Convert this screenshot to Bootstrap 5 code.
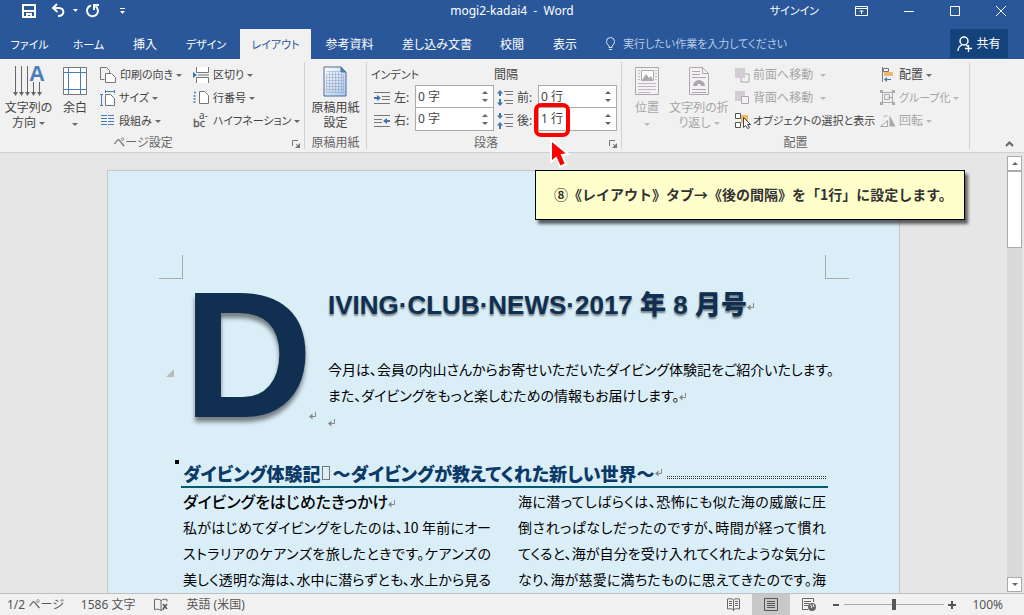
<!DOCTYPE html>
<html lang="ja">
<head>
<meta charset="utf-8">
<meta name="viewport" content="width=device-width, initial-scale=1">
<title>mogi2-kadai4 - Word</title>
<link href="https://cdn.jsdelivr.net/npm/bootstrap@5.3.0/dist/css/bootstrap.min.css" rel="stylesheet">
<style>
:root{--blue:#2a579a;--ink:#444;--dim:#a6a6a6;--line:#d2d2d2;--accent:#3f76b0}
body{font-family:"Noto Sans","Noto Sans CJK JP",sans-serif;font-size:12px;line-height:16px;color:var(--ink);font-feature-settings:"palt";background:#e6e6e6}
button,input{font:inherit;font-feature-settings:inherit;color:inherit;background:none;border:0;padding:0}
button{white-space:nowrap}
svg{display:block;flex:none;overflow:visible}
.kana{font-size:11px}
.app-head{background:var(--blue);color:#fff}
.title-row{display:grid;grid-template-columns:1fr auto 1fr;height:21px}
.win-tools{gap:36px;padding-right:18px}
.tab-row{padding-top:8px;height:38px}
.ribbon-tabs{display:grid;grid-template-columns:59px 59px 54px 68px 71px 77px 98px 52px 54px}
.ribbon-tabs a{color:#fff;text-decoration:none;display:flex;align-items:center;justify-content:center;height:30px;padding-top:2px;white-space:nowrap}
.ribbon-tabs a.current{background:#f1f1f1;color:var(--blue)}
.tell-me{width:190px;outline:0}
.tell-me::placeholder{color:#b8cbe6;opacity:1}
.share-btn{background:#14427b;width:58px;height:29px;margin-right:16px}
.ribbon{background:#f1f1f1;border-bottom:1px solid #d0d0d0;height:94px;padding-top:3px}
.r-group{border-right:1px solid var(--line);height:87px;display:flex;flex-direction:column;flex:none}
.r-body{display:flex;height:70px}
.r-caption{height:17px;color:#666;position:relative;text-align:center;line-height:22px}
.launcher{position:absolute;right:4px;top:8px}
.r-stack{display:flex;flex-direction:column;flex:none}
.r-stack>button,.r-line{height:23px;display:flex;align-items:center;gap:4px;padding-top:2px}
.big-btn{display:flex;flex-direction:column;align-items:center;padding-top:3px;line-height:15px;flex:none}
.big-btn svg.pic{height:32px;margin-bottom:3px}
.dim{color:var(--dim)}
.caret{display:inline-block;border:3px solid transparent;border-top-color:#6a6a6a;border-bottom:0;vertical-align:middle}
.dim .caret{border-top-color:#b8b8b8}
.spin{position:relative;display:flex;width:79px;height:23px;border:1px solid #ababab;background:#fff}
.spin+.spin{border-top:0}
.spin input{flex:1;min-width:0;padding-left:2px;outline:0}
.spin-arrows{display:flex;flex-direction:column;justify-content:space-around;width:14px;padding:3px}
.spin-arrows button{line-height:0}
.up,.down{display:block;width:0;border:3px solid transparent}
.up{border-bottom-color:#666;border-top:0}
.down{border-top-color:#666;border-bottom:0}
.ring{position:absolute;left:-5px;top:-5px;width:36px;height:34px;border:4px solid #f00;border-radius:7px;z-index:3}
.pointer{position:absolute;left:11px;top:30px;z-index:4}
.workspace{position:relative;flex:1;min-height:0;overflow:hidden}
.canvas{flex:1;min-width:0;overflow:hidden;padding-top:17px}
.paper{max-width:793px;min-height:1123px;margin:0 auto;background:#daeef8;border:1px solid #c6c6c6;padding-top:84px;color:#000;font-family:"Noto Sans CJK JP",sans-serif;font-size:14px;line-height:26px}
.crops{display:flex;justify-content:space-between;padding:0 50px 0 51px}
.crops i{width:24px;height:24px;border-bottom:1px solid #ababab}
.crops i:first-child{border-right:1px solid #ababab}
.crops i:last-child{border-left:1px solid #ababab}
.paper-text{position:relative;padding:0 71px 0 73px}
.hero{display:flex;padding-left:2px}
.drop-cap{position:relative;flex:none;width:145px;font:bold 180px/152px "Liberation Sans",sans-serif;color:#112f50;text-shadow:0 5px 4px #0007}
.news-title{font:bold 26px/52px "Liberation Sans","Noto Sans CJK JP",sans-serif;color:#112f50;text-shadow:0 2px 2px #0007;margin:0 0 25px;white-space:nowrap}
.news-title span{font-weight:900}
.ret{display:inline-block;flex:none}
.story-head{display:flex;align-items:center;height:29px;margin:25px 0 0;border-bottom:2px solid #005a70;font-size:18px;font-weight:900;line-height:26px;color:#0b3a66;padding-left:2px;white-space:nowrap}
.tab-box{width:8px;height:14px;border:1px solid #777;margin:0 3px 0 1px}
.leader{flex:1;height:3px;margin:10px 2px 0 4px;background:repeating-linear-gradient(transparent 0 1px,#daeef8 1px 2px),repeating-linear-gradient(90deg,#333 0 1px,#daeef8 1px 2px)}
.story{display:grid;grid-template-columns:1fr 1fr;gap:27px;padding:0 2px;white-space:nowrap}
.story p{margin:0;text-align:justify;text-align-last:justify}
.story h3{font-size:16px;line-height:26px;font-weight:500;margin:0}
.anchor-dot{position:absolute;left:67px;top:181px;width:4px;height:4px;background:#000}
.fold{position:absolute;left:58px;top:90px;border-left:8px solid transparent;border-bottom:8px solid #b9b9b9}
.callout{position:absolute;right:59px;top:17px;padding:11px 18px 12px;border:1px solid #000;background:#ffc;box-shadow:3px 4px 3px #0009;font:bold 14px/25px "Noto Sans CJK JP",sans-serif;font-feature-settings:normal;color:#333;width:430px;height:50px;white-space:nowrap;z-index:2}
.v-scroll{width:15px;margin:3px 2px 1px 0;background:#dadada}
.v-scroll button{height:15px;border:1px solid #ababab;background:#fff;display:grid;place-items:center}
.v-thumb{height:77px;border:1px solid #ababab;background:#fff}
.status{height:22px;background:#f1f1f1;border-top:1px solid #c0c0c0;color:#555;padding-left:7px}
.status .view-btn{width:38px;height:21px;display:grid;place-items:center}
.status .view-btn.on{background:#c8c8c8}
.zoom-range{appearance:none;width:100px;height:13px;margin:0 4px 0 5px;background:linear-gradient(#aaa,#aaa) 0 6px/100% 1px no-repeat}
.zoom-range::-webkit-slider-thumb{appearance:none;width:4px;height:11px;background:#555}
</style>
<script src="https://cdn.jsdelivr.net/npm/bootstrap@5.3.0/dist/js/bootstrap.bundle.min.js"></script>
</head>
<body class="d-flex flex-column vh-100 overflow-hidden">
<svg width="0" height="0" class="position-absolute" aria-hidden="true">
  <symbol id="ret" viewBox="0 0 8 8"><path d="M6.500 0v4.500H2" fill="none" stroke="#888"/><path d="M0 4.500L3.500 1.500v6z" fill="#888"/></symbol>
  <symbol id="launch" viewBox="0 0 8 8"><path d="M.5 6V.5H6M4 4l3 3" fill="none" stroke="#777"/><path d="M8 3v5H3z" fill="#777"/></symbol>
</svg>

<header class="app-head">
  <div class="title-row align-items-center">
    <div class="d-flex align-items-center" style="padding-left:22px">
      <button aria-label="上書き保存"><svg width="14" height="14"><path d="M1 1h12v12H1z" fill="none" stroke="#fff" stroke-width="2"/><path d="M2 6h10v2H2zM4 9h6v4H8v-2H6v2H4z" fill="#fff"/></svg></button>
      <button class="ms-3 d-flex align-items-center gap-2" aria-label="元に戻す"><svg width="13" height="14"><path d="M5 0L1 4l4.500 4M1 4h6c6 0 6 8-1 8" fill="none" stroke="#fff" stroke-width="2"/></svg><svg width="5" height="3"><path d="M0 0h5L2.500 3z" fill="#fff"/></svg></button>
      <button class="ms-2" aria-label="やり直し"><svg width="14" height="14"><path d="M5 1.500A5.500 5.500 0 1 0 9.500 2.200" fill="none" stroke="#fff" stroke-width="2"/><path d="M8 6V1h5" fill="none" stroke="#fff" stroke-width="2"/></svg></button>
      <button class="ms-3 ps-1" aria-label="クイックアクセスのカスタマイズ"><svg width="5" height="6"><path d="M0 .5h5" stroke="#fff"/><path d="M0 3h5L2.500 6z" fill="#fff"/></svg></button>
    </div>
    <div>mogi2-kadai4 &nbsp;-&nbsp; Word</div>
    <div class="win-tools d-flex align-items-center justify-content-end">
      <button class="kana">サインイン</button>
      <button aria-label="リボンの表示オプション"><svg width="13" height="10"><path d="M.5.500h12v9H.5zM0 2.500h13M6.500 8V4.500M4.500 6l2-2 2 2" fill="none" stroke="#fff"/></svg></button>
      <button aria-label="最小化"><svg width="10" height="10"><path d="M0 5.500h10" stroke="#fff"/></svg></button>
      <button aria-label="最大化"><svg width="10" height="10"><path d="M.5.500h9v9h-9z" fill="none" stroke="#fff"/></svg></button>
      <button aria-label="閉じる"><svg width="10" height="10"><path d="M0 0l10 10M10 0L0 10" stroke="#fff"/></svg></button>
    </div>
  </div>
  <div class="tab-row d-flex align-items-start">
    <nav class="ribbon-tabs">
      <a href="#" class="kana">ファイル</a><a href="#" class="kana">ホーム</a><a href="#">挿入</a><a href="#" class="kana">デザイン</a><a href="#" class="current kana" aria-current="page">レイアウト</a><a href="#">参考資料</a><a href="#">差し込み文書</a><a href="#">校閲</a><a href="#">表示</a>
    </nav>
    <label class="d-flex align-items-center gap-2 flex-fill" style="height:29px;padding-left:14px">
      <svg width="9" height="14"><path d="M3 10.500V9C1.500 7.500.500 6.500.500 4.500a4 4 0 0 1 8 0C8.500 6.500 7.500 7.500 6 9v1.500zM3 12.500h3" fill="none" stroke="#dce6f4"/></svg>
      <input class="tell-me kana" type="text" placeholder="実行したい作業を入力してください" aria-label="実行したい作業">
    </label>
    <button class="share-btn d-flex align-items-center justify-content-center gap-1"><svg width="15" height="16"><circle cx="7" cy="5" r="4" fill="none" stroke="#fff" stroke-width="1.500"/><path d="M1 15c0-3 1.500-5 4-6M9 9l2 1.500M8 12.500h7M11.500 9v7" fill="none" stroke="#fff" stroke-width="1.300"/></svg>共有</button>
  </div>
</header>

<section class="ribbon d-flex">
  <div class="r-group" style="width:305px">
    <div class="r-body">
      <button class="big-btn" style="width:57px">
        <svg class="pic" width="34" height="32"><path d="M3.500 1v28M9.500 1v28M15.500 1v28M21.500 17v12M27.500 17v12" stroke="#666"/><path d="M1 27l2.500 4 2.500-4zM7 27l2.500 4 2.500-4zM13 27l2.500 4 2.500-4zM19 27l2.500 4 2.500-4zM25 27l2.500 4 2.500-4z" fill="#666"/><text x="17" y="16" font-family="Liberation Sans" font-size="22" font-weight="bold" fill="#4a7ebb">A</text></svg>
        <span>文字列の</span><span>方向 <i class="caret"></i></span>
      </button>
      <button class="big-btn" style="width:36px">
        <svg class="pic" width="24" height="32"><path d="M.5 2.500h23v27H.5z" fill="#fff" stroke="#777"/><path d="M5.500 3v26M17.500 3v26M1 7.500h22M1 24.500h22" stroke="#4a7ebb"/></svg>
        <span>余白</span><i class="caret mt-2"></i>
      </button>
      <div class="r-stack kana" style="width:100px;padding-left:7px">
        <button><svg width="16" height="16"><path d="M.5 12.500V.5h6l3 3v3M.5 12.500h4" fill="none" stroke="#777"/><path d="M5.500 6.500h6l4 4v5h-10z" fill="#fff" stroke="#777"/></svg><span>印刷の向き <i class="caret"></i></span></button>
        <button><svg width="15" height="16"><path d="M5.500 4.500h5l4 4v7h-9z" fill="#fff" stroke="#777"/><path d="M1.500 4v12M0 4.500h3M0 15.500h3M5 1.500h10M5.500 0v3M14.500 0v3" stroke="#4a7ebb"/></svg><span>サイズ <i class="caret"></i></span></button>
        <button><svg width="15" height="13"><path d="M1 1.500h6M1 4.500h6M1 7.500h6M1 10.500h6M8 1.500h6M8 4.500h6M8 7.500h6M8 10.500h6" stroke="#4a7ebb"/></svg><span>段組み <i class="caret"></i></span></button>
      </div>
      <div class="r-stack kana">
        <button><svg width="16" height="16"><path d="M3.500 0v5.500h12V0M3.500 16v-5.500h12V16M5 8h11" fill="#fff" stroke="#777"/><path d="M0 5l4 3-4 3z" fill="#3f76b0"/></svg><span>区切り <i class="caret"></i></span></button>
        <button><svg width="16" height="16"><path d="M6.500 1.500h5l4 4v8h-9z" fill="#fff" stroke="#777"/><path d="M2 1.500v3M.5 6h2.500M.5 9h2.500M.5 12h2.500" stroke="#3f76b0" stroke-width="1.500" stroke-dasharray="2 1"/></svg><span>行番号 <i class="caret"></i></span></button>
        <button><svg width="16" height="16"><text x="0" y="14" font-size="11" fill="#555" stroke="#555" stroke-width=".3">bc</text><text x="6" y="6" font-size="10" fill="#555">a-</text></svg><span>ハイフネーション <i class="caret"></i></span></button>
      </div>
    </div>
    <div class="r-caption" style="padding-right:18px">ページ設定<button class="launcher" aria-label="ページ設定の詳細"><svg width="8" height="8"><use href="#launch"/></svg></button></div>
  </div>

  <div class="r-group" style="width:62px">
    <div class="r-body justify-content-center">
      <button class="big-btn">
        <svg class="pic" width="24" height="32"><defs><linearGradient id="pg" x2="1" y2="1"><stop stop-color="#fff"/><stop offset="1" stop-color="#a9c8ef"/></linearGradient></defs><path d="M1 2h17l5 5v24H1z" fill="url(#pg)" stroke="#4a6b94"/><path d="M18 2v5h5" fill="#5d86b8" stroke="#4a6b94"/><path d="M3.500 6.500h14M3.500 9.500h17v18h-17zM3.500 12.500h17M3.500 15.500h17M3.500 18.500h17M3.500 21.500h17M3.500 24.500h17M6.500 7v20M9.500 7v20M12.500 7v20M15.500 7v20M18.500 9v18" fill="none" stroke="#8d9fb9" stroke-width=".5"/></svg>
        <span>原稿用紙</span><span>設定</span>
      </button>
    </div>
    <div class="r-caption">原稿用紙</div>
  </div>

  <div class="r-group" style="width:255px">
    <div class="r-body" style="padding-left:4px">
      <div style="width:123px">
        <div class="r-line kana">インデント</div>
        <div class="d-flex">
          <div class="r-stack" style="width:44px;padding-left:3px">
            <label class="r-line" for="indL"><svg width="16" height="12"><path d="M0 .5h16M8 4.500h8M8 7.500h8M0 11.500h16" stroke="#777"/><path d="M0 5h3V3l4 3-4 3V7H0z" fill="#3f76b0"/></svg>左:</label>
            <label class="r-line" for="indR"><svg width="16" height="12"><path d="M0 .5h16M0 4.500h8M0 7.500h8M0 11.500h16" stroke="#777"/><path d="M16 5h-3V3L9 6l4 3V7h3z" fill="#3f76b0"/></svg>右:</label>
          </div>
          <div>
            <div class="spin"><input id="indL" type="text" value="0 字"><span class="spin-arrows"><button aria-label="増やす"><i class="up"></i></button><button aria-label="減らす"><i class="down"></i></button></span></div>
            <div class="spin"><input id="indR" type="text" value="0 字"><span class="spin-arrows"><button aria-label="増やす"><i class="up"></i></button><button aria-label="減らす"><i class="down"></i></button></span></div>
          </div>
        </div>
      </div>
      <div>
        <div class="r-line">間隔</div>
        <div class="d-flex">
          <div class="r-stack" style="width:44px;padding-left:3px">
            <label class="r-line" for="spB"><svg width="16" height="16"><path d="M7 1.500h9M9 4.500h7M7 10.500h9M9 13.500h7" stroke="#777"/><path d="M3 0l3 3.500H4V6H2V3.500H0zM3 16l3-3.500H4V9H2v3.500H0z" fill="#3f76b0"/></svg>前:</label>
            <label class="r-line" for="spA"><svg width="16" height="16"><path d="M7 1.500h9M9 4.500h7M7 10.500h9M9 13.500h7" stroke="#777"/><path d="M3 6l3-3.500H4V0H2v2.500H0zM3 9l3 3.500H4V16H2v-3.500H0z" fill="#3f76b0"/></svg>後:</label>
          </div>
          <div>
            <div class="spin"><input id="spB" type="text" value="0 行"><span class="spin-arrows"><button aria-label="増やす"><i class="up"></i></button><button aria-label="減らす"><i class="down"></i></button></span></div>
            <div class="spin"><input id="spA" type="text" value="1 行"><span class="spin-arrows"><button aria-label="増やす"><i class="up"></i></button><button aria-label="減らす"><i class="down"></i></button></span>
              <span class="ring"></span>
              <svg class="pointer" width="20" height="32"><path d="M1 2v22l5-4 4 9 6-3-4-9 6-1z" fill="#f00" stroke="#fff" stroke-width="2"/></svg>
            </div>
          </div>
        </div>
      </div>
    </div>
    <div class="r-caption" style="padding-right:16px">段落<button class="launcher" aria-label="段落の詳細"><svg width="8" height="8"><use href="#launch"/></svg></button></div>
  </div>

  <div class="r-group" style="width:348px">
    <div class="r-body">
      <button class="big-btn dim" style="width:50px" disabled>
        <svg class="pic" width="24" height="32"><path d="M.5 2.500h23v27H.5z" fill="#f6eff6" stroke="#aaa"/><path d="M6.500 5.500h12v10h-12z" fill="#fff" stroke="#aaa"/><path d="M7 15l4-6 3 4 2-2 2 4z" fill="#aaa"/><path d="M3 5.500h2M3 8.500h2M3 11.500h2M3 14.500h2M20 5.500h2M20 8.500h2M20 11.500h2M20 14.500h2M3 18.500h18M3 21.500h18M3 24.500h18M3 27.500h12" stroke="#bbb"/></svg>
        <span>位置</span><i class="caret mt-2"></i>
      </button>
      <button class="big-btn dim" style="width:54px" disabled>
        <svg class="pic" width="22" height="32"><path d="M1.500 2.500h13l6 6v21h-19z" fill="#f6eff6" stroke="#aaa"/><path d="M14.500 2.500v6h6M4 6.500h8M4 9.500h8M4 12.500h14M4 24.500h14M4 27.500h14" fill="none" stroke="#aaa"/><path d="M5 21a6 6 0 0 1 12 0h-4a2 2 0 0 0-4 0z" fill="#aaa"/></svg>
        <span>文字列の折</span><span>り返し <i class="caret"></i></span>
      </button>
      <div class="r-stack" style="width:145px;padding-left:9px">
        <button class="dim" disabled><svg width="14" height="14"><path d="M6 6h8v8H6z" fill="none" stroke="#aaa"/><path d="M0 0h10v10H0z" fill="#d4ccd4"/></svg><span>前面へ移動 <i class="caret ms-1"></i></span></button>
        <button class="dim" disabled><svg width="14" height="14"><path d="M0 0h10v10H0z" fill="#d4ccd4"/><path d="M6.500 5.500h7v7h-7z" fill="#f6eff6" stroke="#aaa"/></svg><span>背面へ移動 <i class="caret ms-1"></i></span></button>
        <button class="kana"><svg width="14" height="16"><path d="M6 2h7v8H6z" fill="#eeb867"/><path d="M.5.500h5v5h-5zM.5 9.500h5v5h-5z" fill="#fff" stroke="#555"/><path d="M8.500 4.500v10l2-2 2 3 2-1-2-3h3z" fill="#fff" stroke="#444"/></svg><span>オブジェクトの選択と表示</span></button>
      </div>
      <div class="r-stack" style="padding-left:9px">
        <button><svg width="15" height="15"><path d="M2.500 0v15" stroke="#777"/><path d="M3.500 1.500h5v3h-5z" fill="#fff" stroke="#777"/><path d="M4 5h9v4H4z" fill="#eeb867"/><path d="M4 12.500l3-2.500v2h4v1H7v2z" fill="#3f76b0"/></svg><span>配置 <i class="caret"></i></span></button>
        <button class="dim kana" disabled><svg width="15" height="15"><path d="M2.500 2.500h10v10h-10zM4.500 4.500h5v5h-5zM7.500 7.500h5" fill="none" stroke="#aaa"/><path d="M0 0h3v3H0zM12 0h3v3h-3zM0 12h3v3H0zM12 12h3v3h-3z" fill="#aaa"/></svg><span>グループ化 <i class="caret"></i></span></button>
        <button class="dim" disabled><svg width="15" height="13"><path d="M.5 12.500h7v-6zM4 3.500C4 1 6 1.500 7.500 2" fill="none" stroke="#aaa"/><path d="M9.500 1v11.500h6z" fill="#aaa"/></svg><span>回転 <i class="caret"></i></span></button>
      </div>
    </div>
    <div class="r-caption">配置</div>
  </div>
  <div class="flex-fill d-flex align-items-end justify-content-end" style="padding:0 10px 5px"><button aria-label="リボンを折りたたむ"><svg width="9" height="6"><path d="M1 5l3.500-3.500L8 5" fill="none" stroke="#666" stroke-width="2"/></svg></button></div>
</section>

<main class="workspace d-flex">
  <div class="canvas">
    <article class="paper">
      <div class="crops"><i></i><i></i></div>
      <div class="paper-text">
        <i class="fold"></i><i class="anchor-dot"></i>
        <div class="hero">
          <div class="drop-cap">D<svg class="ret position-absolute end-0 bottom-0" style="margin:0 11px 14px 0" width="8" height="8"><use href="#ret"/></svg></div>
          <div>
            <h1 class="news-title">IVING·CLUB·NEWS·2017 <span>年</span> 8 <span>月号</span><svg class="ret" width="8" height="8"><use href="#ret"/></svg></h1>
            <div class="text-nowrap">今月は、会員の内山さんからお寄せいただいたダイビング体験記をご紹介いたします。<br>また、ダイビングをもっと楽しむための情報もお届けします。<svg class="ret" width="8" height="8"><use href="#ret"/></svg><br><svg class="ret" width="8" height="8"><use href="#ret"/></svg></div>
          </div>
        </div>
        <h2 class="story-head">ダイビング体験記<i class="tab-box"></i>～ダイビングが教えてくれた新しい世界～<svg class="ret" width="8" height="8"><use href="#ret"/></svg><i class="leader"></i></h2>
        <div class="story">
          <div>
            <h3>ダイビングをはじめたきっかけ<svg class="ret" width="8" height="8"><use href="#ret"/></svg></h3>
            <p>私がはじめてダイビングをしたのは、10 年前にオー<br>ストラリアのケアンズを旅したときです。ケアンズの<br>美しく透明な海は、水中に潜らずとも、水上から見る</p>
          </div>
          <p>海に潜ってしばらくは、恐怖にも似た海の威厳に圧<br>倒されっぱなしだったのですが、時間が経って慣れ<br>てくると、海が自分を受け入れてくれたような気分に<br>なり、海が慈愛に満ちたものに思えてきたのです。海</p>
        </div>
      </div>
    </article>
  </div>
  <div class="v-scroll d-flex flex-column">
    <button aria-label="上へスクロール"><i class="up"></i></button>
    <div class="v-thumb"></div>
    <button class="mt-auto" aria-label="下へスクロール"><i class="down"></i></button>
  </div>
  <div class="callout" role="note">⑧《レイアウト》タブ→《後の間隔》を「1行」に設定します。</div>
</main>

<footer class="status d-flex align-items-center">
  <span>1/2 ページ</span><span style="margin-left:17px">1586 文字</span>
  <svg style="margin:0 18px 0 19px" width="14" height="12"><path d="M7 11.500C5 10 3 10 .500 10.500V.500C3 0 5 0 7 1.500zM7 1.500C9 0 11 0 13 .5v2M7 11.500c1-.8 2-1 3-1" fill="none" stroke="#666"/><path d="M9 5l4 5M13 5l-4 5" stroke="#555" stroke-width="1.500"/></svg>
  <span>英語 (米国)</span>
  <div class="ms-auto d-flex align-items-center">
    <button class="view-btn" aria-label="閲覧モード"><svg width="13" height="13"><path d="M6.500 12C5 10.500 3 10.500.500 11V1c2.500-.5 4.500-.5 6 1 1.500-1.500 3.500-1.500 6-1v10c-2.500-.5-4.500-.5-6 1zM6.500 2v11M2 3.500h3M2 5.500h3M2 7.500h3M8 3.500h3M8 5.500h3M8 7.500h3" fill="none" stroke="#666"/></svg></button>
    <button class="view-btn on" aria-label="印刷レイアウト"><svg width="14" height="13"><path d="M.5.500h13v12H.5zM3 3.500h8M3 5.500h8M3 7.500h8M3 9.500h8" fill="none" stroke="#555"/></svg></button>
    <button class="view-btn" aria-label="Webレイアウト"><svg width="14" height="13"><path d="M6 11.500H.5V.5h11V4M2 3.500h7M2 5.500h5M2 7.500h4" fill="none" stroke="#666"/><circle cx="10" cy="9" r="4" fill="#666"/><path d="M8 7l2 1-1 2M11 6l1 3" fill="none" stroke="#eee"/></svg></button>
    <button style="margin-left:5px" aria-label="縮小"><svg width="6" height="10"><path d="M0 5h6" stroke="#555" stroke-width="2"/></svg></button>
    <input class="zoom-range" type="range" min="10" max="190" value="100" aria-label="ズーム">
    <button aria-label="拡大"><svg width="8" height="8"><path d="M0 4h8M4 0v8" stroke="#555" stroke-width="2"/></svg></button>
    <span style="margin:0 21px 0 16px">100%</span>
  </div>
</footer>
</body>
</html>
